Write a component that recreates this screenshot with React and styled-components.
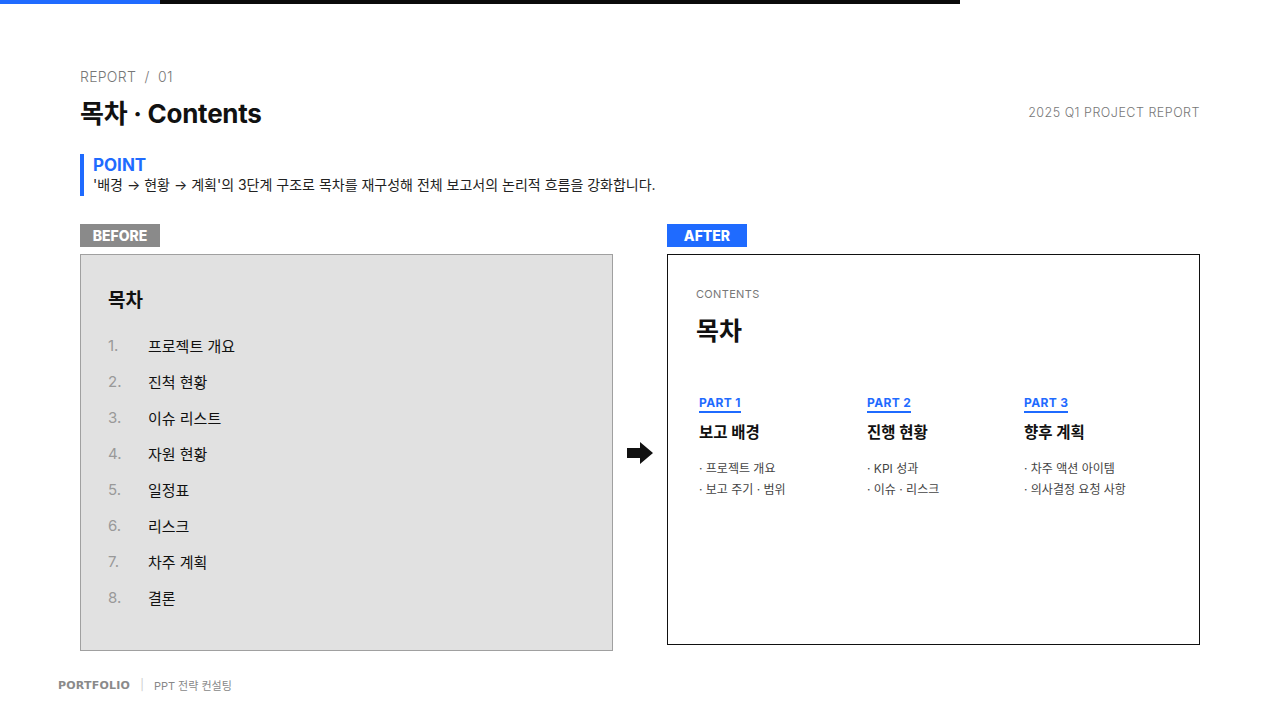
import styled, { createGlobalStyle } from 'styled-components';

const Global = createGlobalStyle`
  body { margin: 0; background: #fff; font-family: Inter, "Noto Sans CJK KR", sans-serif; color: #111; }
`;

const Page = styled.div`
  width: 1280px; height: 720px; position: relative; overflow: hidden; background: #fff;
`;
const TopBar = styled.div`
  display: flex; width: 960px; height: 4px;
  span:first-child { width: 160px; background: #1f6bff; }
  span:last-child { flex: 1; background: #0a0a0a; }
`;
const Main = styled.div`
  padding: 64px 80px 0 80px;
`;
const HeaderRow = styled.div`
  display: flex; justify-content: space-between; align-items: flex-end;
`;
const Crumb = styled.div`
  font-size: 14px; color: #777; letter-spacing: 0.02em; font-weight: 300;
`;
const Title = styled.h1`
  margin: 8px 0 0; font-size: 26px; font-weight: 700; letter-spacing: -0.01em;
`;
const Code = styled.div`
  font-size: 12.5px; color: #777; letter-spacing: 0.04em; margin-bottom: 10px; font-weight: 300;
`;
const Point = styled.div`
  margin-top: 24px; border-left: 4px solid #1f6bff; padding-left: 9px; height: 42px;
  display: flex; flex-direction: column; justify-content: center;
`;
const PointLabel = styled.div`
  color: #1f6bff; font-weight: 700; font-size: 17px; line-height: 19px;
`;
const PointText = styled.div`
  font-size: 14px; color: #222; line-height: 20px;
`;
const Compare = styled.div`
  display: grid; grid-template-columns: 533px 54px 533px; margin-top: 28px;
`;
const Col = styled.div` display: flex; flex-direction: column; `;
const Tag = styled.div`
  width: 80px; height: 23px; background: ${p => p.$c}; color: #fff; font-weight: 800;
  font-size: 14px; display: flex; align-items: center; justify-content: center; margin-bottom: 7px;
`;
const BeforeBox = styled.div`
  height: 397px; box-sizing: border-box; background: #e1e1e1; border: 1px solid #a0a0a0;
  padding: 30px 27px;
`;
const BeforeTitle = styled.div` font-size: 19px; font-weight: 700; margin-bottom: 15px; `;
const Item = styled.div`
  display: flex; height: 36px; align-items: center; font-size: 15px;
  span:first-child { width: 40px; color: #999; }
`;
const ArrowCell = styled.div`
  display: flex; align-items: center; justify-content: center; padding-top: 30px;
`;
const AfterBox = styled.div`
  height: 391px; box-sizing: border-box; border: 1px solid #111; padding: 32px 28px;
`;
const Small = styled.div` font-size: 11px; color: #777; letter-spacing: 0.03em; `;
const AfterTitle = styled.div` font-size: 25px; font-weight: 700; margin-top: 10px; `;
const Parts = styled.div`
  display: grid; grid-template-columns: 168px 157px 1fr; margin-top: 44px; padding-left: 3px;
`;
const PartLabel = styled.div`
  display: inline-block; color: #1f6bff; font-weight: 700; font-size: 12px; letter-spacing: 0.03em;
  border-bottom: 2px solid #1f6bff; padding-bottom: 1px;
`;
const PartTitle = styled.div` font-size: 15.5px; font-weight: 700; margin: 7px 0 16px; `;
const Bullet = styled.div` font-size: 12px; color: #444; line-height: 21px; `;
const Footer = styled.div`
  position: absolute; left: 58px; top: 677px; display: flex; align-items: center; gap: 10px;
  font-size: 11px; color: #888;
  b { font-family: "DejaVu Sans", sans-serif; font-weight: 700; letter-spacing: 0.02em; color: #8a8a8a; font-size: 11px; }
  i { font-style: normal; color: #ccc; }
`;

const parts = [
  { n: 'PART 1', t: '보고 배경', b: ['· 프로젝트 개요', '· 보고 주기 · 범위'] },
  { n: 'PART 2', t: '진행 현황', b: ['· KPI 성과', '· 이슈 · 리스크'] },
  { n: 'PART 3', t: '향후 계획', b: ['· 차주 액션 아이템', '· 의사결정 요청 사항'] },
];
const items = ['프로젝트 개요', '진척 현황', '이슈 리스트', '자원 현황', '일정표', '리스크', '차주 계획', '결론'];

export default function App() {
  return (
    <Page>
      <Global />
      <TopBar><span /><span /></TopBar>
      <Main>
        <HeaderRow>
          <div>
            <Crumb>REPORT &nbsp;/&nbsp; 01</Crumb>
            <Title>목차 · Contents</Title>
          </div>
          <Code>2025 Q1 PROJECT REPORT</Code>
        </HeaderRow>
        <Point>
          <PointLabel>POINT</PointLabel>
          <PointText>'배경 → 현황 → 계획'의 3단계 구조로 목차를 재구성해 전체 보고서의 논리적 흐름을 강화합니다.</PointText>
        </Point>
        <Compare>
          <Col>
            <Tag $c="#8a8a8a">BEFORE</Tag>
            <BeforeBox>
              <BeforeTitle>목차</BeforeTitle>
              {items.map((it, i) => (
                <Item key={i}><span>{i + 1}.</span><span>{it}</span></Item>
              ))}
            </BeforeBox>
          </Col>
          <ArrowCell>
            <svg width="26" height="22" viewBox="0 0 26 22"><path d="M0 6h13V0l13 11-13 11v-6H0z" fill="#111" /></svg>
          </ArrowCell>
          <Col>
            <Tag $c="#1f6bff">AFTER</Tag>
            <AfterBox>
              <Small>CONTENTS</Small>
              <AfterTitle>목차</AfterTitle>
              <Parts>
                {parts.map(p => (
                  <div key={p.n}>
                    <PartLabel>{p.n}</PartLabel>
                    <PartTitle>{p.t}</PartTitle>
                    {p.b.map(x => <Bullet key={x}>{x}</Bullet>)}
                  </div>
                ))}
              </Parts>
            </AfterBox>
          </Col>
        </Compare>
      </Main>
      <Footer><b>PORTFOLIO</b><i>|</i><span>PPT 전략 컨설팅</span></Footer>
    </Page>
  );
}
